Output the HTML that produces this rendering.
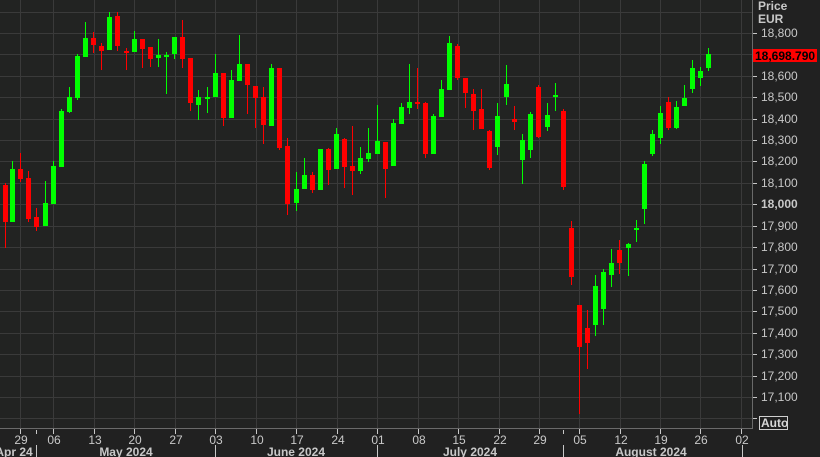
<!DOCTYPE html>
<html><head><meta charset="utf-8"><style>
html,body{margin:0;padding:0;background:#212121;width:820px;height:457px;overflow:hidden}
svg{display:block}
text{font-family:"Liberation Sans",sans-serif}
</style></head><body>
<svg id="s" width="820" height="457" xmlns="http://www.w3.org/2000/svg">
<rect x="0" y="0" width="820" height="457" fill="#212121"/>
<rect x="0" y="0" width="752" height="428" fill="#222322"/>
<g id="grid" stroke="#3a3a3a" stroke-width="1"></g>
<g id="c"></g>
<line x1="752.5" y1="0" x2="752.5" y2="429" stroke="#6a6a6a"/>
<line x1="0" y1="428.5" x2="752" y2="428.5" stroke="#6a6a6a"/>
<g id="ax" fill="#c8c8c8" font-size="12"></g>
<text x="758" y="10" fill="#c8c8c8" font-size="12" font-weight="bold">Price</text>
<text x="758" y="23" fill="#c8c8c8" font-size="12" font-weight="bold">EUR</text>
<rect x="753" y="49" width="64" height="13" fill="#ff0000"/>
<text x="755" y="60" fill="#000" font-size="12" font-weight="bold">18,698.790</text>
<rect x="759.5" y="416.5" width="28" height="13" fill="none" stroke="#d0d0d0"/>
<text x="761" y="427" fill="#d8d8d8" font-size="12" font-weight="bold">Auto</text>
<g fill="#c8c8c8" font-size="12" font-weight="bold" text-anchor="middle">
<text x="14" y="456">Apr 24</text>
<text x="126" y="456">May 2024</text>
<text x="296" y="456">June 2024</text>
<text x="470" y="456">July 2024</text>
<text x="651" y="456">August 2024</text>
</g>
<g stroke="#c8c8c8">
<line x1="36.5" y1="430" x2="36.5" y2="434"/>
<line x1="563.5" y1="430" x2="563.5" y2="434"/>
<line x1="36.5" y1="445" x2="36.5" y2="457"/>
<line x1="215.5" y1="445" x2="215.5" y2="457"/>
<line x1="377.5" y1="445" x2="377.5" y2="457"/>
<line x1="563.5" y1="445" x2="563.5" y2="457"/>
<line x1="742.5" y1="445" x2="742.5" y2="457"/>
</g>
</svg>
<script>
var NS="http://www.w3.org/2000/svg";
function el(p,t,a){var e=document.createElementNS(NS,t);for(var k in a)e.setAttribute(k,a[k]);p.appendChild(e);return e;}
var g=document.getElementById("grid"),ax=document.getElementById("ax"),c=document.getElementById("c");
var vx=[[20,"29"],[53,"06"],[94,"13"],[134,"20"],[175,"27"],[215,"03"],[256,"10"],[296,"17"],[337,"24"],[377,"01"],[418,"08"],[458,"15"],[499,"22"],[539,"29"],[579,"05"],[620,"12"],[660,"19"],[700,"26"],[741,"02"]];
vx.forEach(function(v){el(g,"line",{x1:v[0]+.5,y1:0,x2:v[0]+.5,y2:428});
el(ax,"line",{x1:v[0]+.5,y1:429,x2:v[0]+.5,y2:434,stroke:"#c8c8c8"});
var t=el(ax,"text",{x:v[0]+1,y:444,"text-anchor":"middle"});t.textContent=v[1];});
for(var p=18900;p>=17000;p-=100){var y=Math.round(33+(18800-p)*0.2141);
el(g,"line",{x1:0,y1:y+.5,x2:752,y2:y+.5});
if(p<=18800&&p>=17100&&p!=18700){el(ax,"line",{x1:753,y1:y+.5,x2:757,y2:y+.5,stroke:"#c8c8c8"});
var s=(p/1000|0)+","+String(p%1000).padStart(3,"0");
var t=el(ax,"text",{x:761,y:y+4});if(p==18000)t.setAttribute("font-weight","bold");t.textContent=s;}}
el(ax,"line",{x1:753,y1:418.5,x2:757,y2:418.5,stroke:"#c8c8c8"});
var R="#ff0000",G="#00ff00";
var d=[
[4.5,185,222,183,248,R],[12.3,169,222,161,222,G],[20.3,169,179,153,182,R],[28.3,178,219,171,222,R],[36.3,217,227,208,231,R],
[45.3,203,226,181,226,G],[53.3,166,204,161,204,G],[61.3,111,167,109,167,G],[69.3,97,112,87,113,G],[77.3,56,98,54,100,G],
[85.3,38,57,22,57,G],[93.3,38,45,32,53,R],[101.3,46,51,43,70,R],[109.3,17,50,12,50,G],[117.3,16,46,12,51,R],
[126.3,51,53,48,70,R],[134.3,39,52,31,52,G],[142.3,39,49,39,68,R],[150.3,47,59,47,67,R],[158.3,55,58,39,67,G],
[166.3,55,57,52,94,G],[174.3,37,54,37,59,G],[182.3,37,59,20,68,R],[190.3,58,103,58,111,R],[198.3,97,105,90,120,G],
[207.3,97,98,87,113,G],[215.3,73,97,54,97,G],[223.3,73,118,73,126,R],[231.3,80,118,70,118,G],[239.3,64,81,35,81,G],
[247.3,64,85,64,114,R],[255.3,86,98,86,128,R],[263.3,97,125,87,144,R],[271.3,68,126,64,126,G],[279.3,68,148,68,150,R],
[287.3,146,204,138,215,R],[296.3,189,203,172,211,G],[304.3,175,189,158,189,G],[312.3,175,190,172,193,R],[320.3,149,190,149,190,G],
[328.3,149,170,148,185,R],[336.3,134,169,128,169,G],[344.3,139,167,138,188,R],[352.3,166,171,126,195,R],[360.3,158,171,147,174,G],
[368.3,153,159,128,162,G],[377.3,141,154,105,154,G],[385.3,142,169,142,198,R],[393.3,123,166,119,166,G],[401.3,107,124,103,124,G],
[409.3,102,108,64,114,G],[417.3,102,103,68,109,R],[425.3,103,154,102,158,R],[433.3,116,154,114,154,G],[441.3,89,117,80,117,G],
[449.3,43,90,36,90,G],[457.3,46,78,44,80,R],[465.3,78,93,78,108,R],[473.3,94,111,89,130,R],[481.3,109,129,89,129,R],
[489.3,131,168,130,170,R],[497.3,116,147,103,155,G],[506.3,84,97,65,105,G],[514.3,119,122,106,130,R],[522.3,140,160,134,184,G],
[530.3,114,150,112,158,G],[538.3,87,137,85,138,R],[547.3,115,127,103,131,G],[555.3,95,97,83,111,G],[563.3,111,187,109,190,R],
[571.3,228,277,221,285,R],[579.3,305,347,305,414,R],[587.3,328,343,310,369,R],[595.3,286,325,275,336,G],[603.3,272,309,269,325,G],
[611.3,263,275,249,287,G],[619.3,250,263,240,274,R],[628.3,244,248,243,276,G],[636.3,228,230,220,242,G],[644.3,164,209,161,224,G],
[652.3,134,154,130,156,G],[660.3,113,138,106,144,G],[668.3,102,128,97,130,R],[676.3,107,128,101,129,G],[684.3,98,106,85,106,G],
[692.3,68,89,60,93,G],[700.3,71,78,67,86,G],[708.3,54,68,48,71,G]];
d.forEach(function(k){var x=Math.round(k[0]);
el(c,"rect",{x:x,y:k[3],width:1,height:k[4]-k[3],fill:k[5]});
var h=Math.max(2,k[2]-k[1]);el(c,"rect",{x:x-2,y:k[1],width:5,height:h,fill:k[5]});});
</script>
</body></html>
